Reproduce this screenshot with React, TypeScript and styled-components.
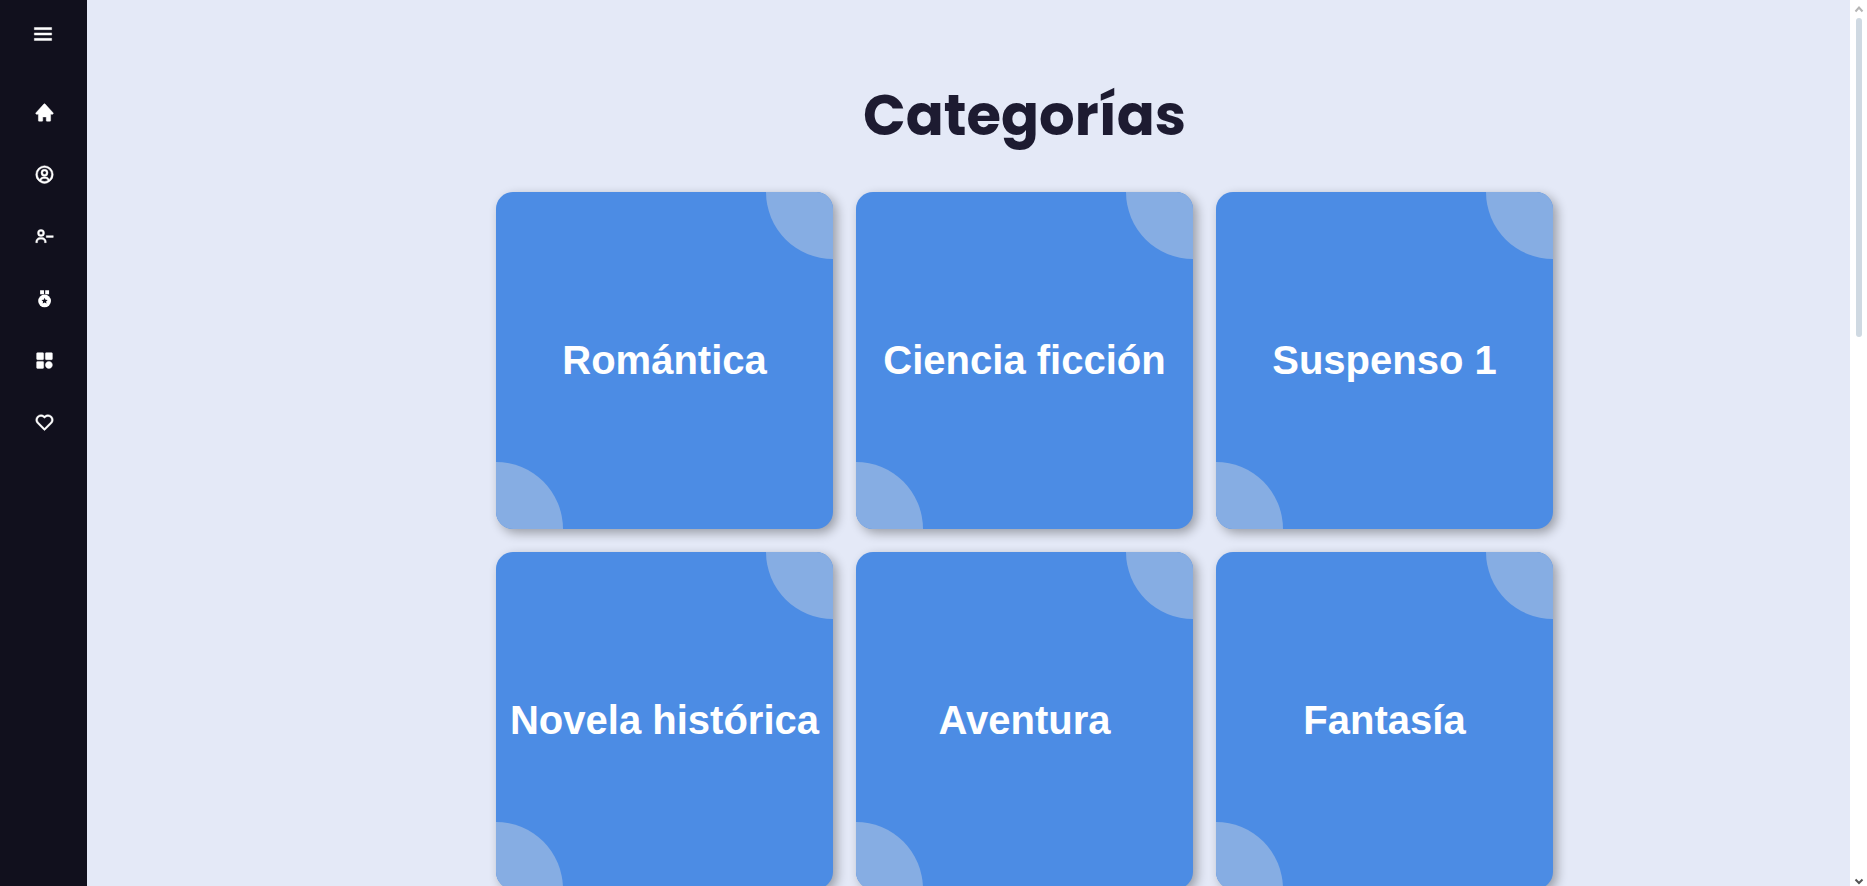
import React from "react";
import styled, { createGlobalStyle } from "styled-components";
import {
  BiHeart,
  BiMenu,
  BiSolidCategory,
  BiSolidHome,
  BiUserCircle,
  BiUserMinus,
} from "react-icons/bi";

const GlobalStyle = createGlobalStyle`
  * { box-sizing: border-box; }
  body {
    margin: 0;
    background: #e4e9f7;
    font-family: "Liberation Sans", Arial, sans-serif;
  }
`;

const Shell = styled.div`
  display: flex;
  height: 100vh;
  overflow: hidden;
`;

const Sidebar = styled.nav`
  display: flex;
  flex-direction: column;
  flex: 0 0 87px;
  background: #11101d;
  color: #fff;
`;

const MenuButton = styled.button`
  display: flex;
  align-items: center;
  justify-content: center;
  height: 68px;
  padding: 0 1px 0 0;
  border: 0;
  background: none;
  color: inherit;
  font-size: 26px;
  cursor: pointer;

  path {
    stroke: currentColor;
    stroke-width: 0.4;
  }
`;

const NavList = styled.ul`
  margin: 13px 0 0;
  padding: 0;
  list-style: none;
`;

const NavLink = styled.a`
  display: flex;
  align-items: center;
  justify-content: center;
  height: 62px;
  padding-left: 1px;
  color: inherit;
  font-size: 21px;

  path {
    stroke: currentColor;
    stroke-width: 0.5;
  }
`;

const Main = styled.main`
  flex: 1;
  min-width: 0;
  padding: 74px 0 0 112px;
  background: #e4e9f7;
`;

const Title = styled.h1`
  margin: 0 0 34px;
  color: #1d1b31;
  font-family: Poppins, Inter, sans-serif;
  font-size: 56px;
  font-weight: 700;
  line-height: 84px;
  text-align: center;
`;

const Grid = styled.div`
  display: grid;
  grid-template-columns: repeat(3, 337px);
  justify-content: center;
  gap: 23px;
`;

const Card = styled.a`
  position: relative;
  display: flex;
  align-items: center;
  justify-content: center;
  height: 337px;
  border-radius: 17px;
  background: #4c8ce4;
  box-shadow: 4px 4px 11px rgba(0, 0, 0, 0.33);
  color: #fff;
  font-size: 40px;
  font-weight: 700;
  text-decoration: none;
  white-space: nowrap;

  &::before,
  &::after {
    content: "";
    position: absolute;
    width: 20%;
    height: 20%;
    background: #86ade3;
  }

  &::before {
    top: 0;
    right: 0;
    border-radius: 0 17px 0 100%;
  }

  &::after {
    bottom: 0;
    left: 0;
    border-radius: 0 100% 0 17px;
  }
`;

const ScrollTrack = styled.div`
  display: flex;
  flex-direction: column;
  align-items: center;
  flex: 0 0 17px;
  background: #fff;
`;

const ScrollThumb = styled.div`
  width: 6px;
  height: 36%;
  border-radius: 3px;
  background: #cfd9e2;
`;

const ArrowBox = styled.svg<{ $tone: string }>`
  display: block;
  width: 17px;
  height: 18px;
  fill: none;
  stroke: ${({ $tone }) => $tone};
  stroke-width: 2;
`;

const Spacer = styled.div`
  flex: 1;
`;

function MedalIcon() {
  return (
    <svg width="1em" height="1em" viewBox="0 0 24 24" fill="currentColor">
      <rect x="7" y="2.6" width="4.4" height="4.6" />
      <rect x="12.8" y="2.6" width="4.4" height="4.6" />
      <circle cx="12.1" cy="14.8" r="7.3" />
      <polygon
        fill="#11101d"
        points="12.1,11 13.1,13.3 15.6,13.6 13.8,15.3 14.3,17.8 12.1,16.6 9.9,17.8 10.4,15.3 8.6,13.6 11.1,13.3"
      />
    </svg>
  );
}

const navItems = [
  { label: "Inicio", icon: BiSolidHome },
  { label: "Perfil", icon: BiUserCircle },
  { label: "Seguidos", icon: BiUserMinus },
  { label: "Logros", icon: MedalIcon },
  { label: "Categorías", icon: BiSolidCategory },
  { label: "Favoritos", icon: BiHeart },
];

const categories = [
  "Romántica",
  "Ciencia ficción",
  "Suspenso 1",
  "Novela histórica",
  "Aventura",
  "Fantasía",
];

export default function App() {
  return (
    <>
      <GlobalStyle />
      <Shell>
        <Sidebar>
          <MenuButton type="button" aria-label="Menú">
            <BiMenu />
          </MenuButton>
          <NavList>
            {navItems.map(({ label, icon: Icon }) => (
              <li key={label}>
                <NavLink href="#" aria-label={label}>
                  <Icon />
                </NavLink>
              </li>
            ))}
          </NavList>
        </Sidebar>
        <Main>
          <Title>Categorías</Title>
          <Grid>
            {categories.map((name) => (
              <Card key={name} href="#">
                {name}
              </Card>
            ))}
          </Grid>
        </Main>
        <ScrollTrack aria-hidden="true">
          <ArrowBox $tone="#b5b5b5" viewBox="0 0 17 18">
            <path d="M5.5 11.5 9 7.5l3.5 4" />
          </ArrowBox>
          <ScrollThumb />
          <Spacer />
          <ArrowBox $tone="#555" viewBox="0 0 17 18">
            <path d="M5.5 11.5 9 15l3.5-3.5" />
          </ArrowBox>
        </ScrollTrack>
      </Shell>
    </>
  );
}
